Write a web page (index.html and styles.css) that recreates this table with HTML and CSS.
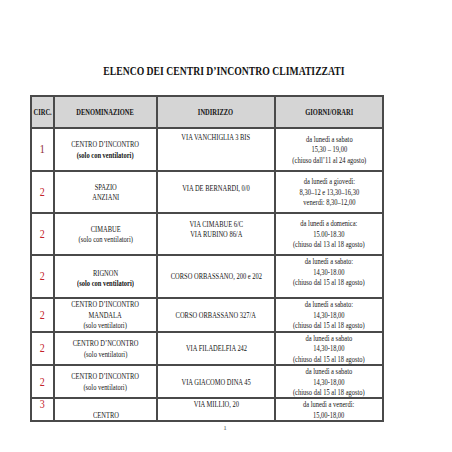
FILE: index.html
```html
<!DOCTYPE html>
<html lang="it">
<head>
<meta charset="utf-8">
<title>Elenco dei centri d'incontro climatizzati</title>
<link rel="stylesheet" href="styles.css">
</head>
<body>
<div class="page">
  <h1 class="title"><span class="t">ELENCO DEI CENTRI D’INCONTRO CLIMATIZZATI</span></h1>
  <table class="grid">
    <colgroup>
      <col class="c-circ"><col class="c-den"><col class="c-ind"><col class="c-gio">
    </colgroup>
    <thead>
      <tr class="r-head">
        <th><div class="c"><span class="t">CIRC.</span></div></th>
        <th><div class="c"><span class="t">DENOMINAZIONE</span></div></th>
        <th><div class="c"><span class="t">INDIRIZZO</span></div></th>
        <th><div class="c"><span class="t">GIORNI/ORARI</span></div></th>
      </tr>
    </thead>
    <tbody>
      <tr class="r1">
        <td class="num"><div class="c"><span class="t one">1</span></div></td>
        <td><div class="c"><span class="t">CENTRO D’INCONTRO<br><b>(solo con ventilatori)</b></span></div></td>
        <td class="top p4"><div class="c"><span class="t">VIA VANCHIGLIA 3 BIS</span></div></td>
        <td><div class="c"><span class="t">da lunedì a sabato<br>15,30 – 19,00<br>(chiuso dall’11 al 24 agosto)</span></div></td>
      </tr>
      <tr class="r2">
        <td class="num"><div class="c"><span class="t">2</span></div></td>
        <td><div class="c"><span class="t">SPAZIO<br>ANZIANI</span></div></td>
        <td class="pb8"><div class="c"><span class="t">VIA DE BERNARDI, 0/0</span></div></td>
        <td><div class="c"><span class="t">da lunedì a giovedì:<br>8,30–12 e 13,30–16,30<br>venerdì: 8,30–12,00</span></div></td>
      </tr>
      <tr class="r3">
        <td class="num"><div class="c"><span class="t">2</span></div></td>
        <td><div class="c"><span class="t">CIMABUE<br>(solo con ventilatori)</span></div></td>
        <td class="pb10"><div class="c"><span class="t">VIA CIMABUE 6/C<br>VIA RUBINO 86/A</span></div></td>
        <td><div class="c"><span class="t">da lunedì a domenica:<br>15.00-18.30<br>(chiuso dal 13 al 18 agosto)</span></div></td>
      </tr>
      <tr class="r4">
        <td class="num"><div class="c"><span class="t">2</span></div></td>
        <td class="pt3"><div class="c"><span class="t">RIGNON<br><b>(solo con ventilatori)</b></span></div></td>
        <td><div class="c"><span class="t">CORSO ORBASSANO, 200 e 202</span></div></td>
        <td class="pb9"><div class="c"><span class="t">da lunedì a sabato:<br>14,30-18.00<br>(chiuso dal 15 al 18 agosto)</span></div></td>
      </tr>
      <tr class="r5">
        <td class="num"><div class="c"><span class="t">2</span></div></td>
        <td><div class="c"><span class="t">CENTRO D’INCONTRO<br>MANDALA<br>(solo ventilatori)</span></div></td>
        <td><div class="c"><span class="t">CORSO ORBASSANO 327/A</span></div></td>
        <td><div class="c"><span class="t">da lunedì a sabato:<br>14,30-18,00<br>(chiuso dal 15 al 18 agosto)</span></div></td>
      </tr>
      <tr class="r6">
        <td class="num"><div class="c"><span class="t">2</span></div></td>
        <td><div class="c"><span class="t">CENTRO D’NCONTRO<br>(solo ventilatori)</span></div></td>
        <td><div class="c"><span class="t">VIA FILADELFIA 242</span></div></td>
        <td><div class="c"><span class="t">da lunedì a sabato<br>14,30-18,00<br>(chiuso dal 15 al 18 agosto)</span></div></td>
      </tr>
      <tr class="r7">
        <td class="num"><div class="c"><span class="t">2</span></div></td>
        <td><div class="c"><span class="t">CENTRO D’INCONTRO<br>(solo ventilatori)</span></div></td>
        <td><div class="c"><span class="t">VIA GIACOMO DINA 45</span></div></td>
        <td><div class="c"><span class="t">da lunedì a sabato<br>14,30-18,00<br>(chiuso dal 15 al 18 agosto)</span></div></td>
      </tr>
      <tr class="r8">
        <td class="num top"><div class="c"><span class="t">3</span></div></td>
        <td class="bottom"><div class="c"><span class="t">CENTRO</span></div></td>
        <td class="top"><div class="c"><span class="t">VIA MILLIO, 20</span></div></td>
        <td class="top"><div class="c"><span class="t">da lunedì a venerdì:<br>15,00-18,00</span></div></td>
      </tr>
    </tbody>
  </table>
  <div class="pageno">1</div>
</div>
</body>
</html>
```

FILE: styles.css
```css
html, body {
  margin: 0;
  padding: 0;
  background: #ffffff;
}

.page {
  width: 452px;
  height: 452px;
  overflow: hidden;
  padding-top: 64px;
  box-sizing: border-box;
  font-family: "Liberation Serif", "Times New Roman", serif;
  color: #141414;
}

.title {
  margin: 0;
  height: 14px;
  line-height: 14px;
  font-size: 13px;
  font-weight: bold;
  display: flex;
  justify-content: center;
  padding-right: 4px;
}

.t {
  display: inline-block;
  white-space: nowrap;
  text-align: center;
  transform: scaleX(0.72);
}

.title .t { transform: scaleX(0.745); }

.grid {
  margin-top: 17px;
  margin-left: 30px;
  border-collapse: collapse;
  table-layout: fixed;
  width: 352px;
  font-size: 9px;
  line-height: 10.4px;
}

.c-circ { width: 23px; }
.c-den { width: 103px; }
.c-ind { width: 118px; }
.c-gio { width: 108px; }

.grid th,
.grid td {
  border: 2px solid #4a4a4a;
  padding: 0;
  vertical-align: middle;
  overflow: visible;
}

.grid th {
  background: #d5d5d5;
  font-weight: bold;
}

.c {
  display: flex;
  justify-content: center;
}

.r-head { height: 32px; }
.r1 { height: 43px; }
.r2 { height: 42px; }
.r3 { height: 42px; }
.r4 { height: 43px; }
.r5 { height: 34px; }
.r6 { height: 30px; }
.r7 { height: 31px; }
.r8 { height: 21px; }

.num {
  font-size: 12.5px;
  color: #c4232b;
}

.num .t { transform: scaleX(0.8); }

.one {
  color: #8e2a2a;
  font-weight: normal;
}

.top { vertical-align: top !important; }
.bottom { vertical-align: bottom !important; }
.p4 { padding-top: 3px !important; }
.pb8 { padding-bottom: 8px !important; }
.pb10 { padding-bottom: 10px !important; }
.pb9 { padding-bottom: 9px !important; }
.pt3 { padding-top: 3px !important; }

.pageno {
  width: 452px;
  text-align: center;
  font-size: 7px;
  line-height: 8px;
  margin-top: 2px;
  color: #555555;
  padding-right: 2px;
  box-sizing: border-box;
}
```
